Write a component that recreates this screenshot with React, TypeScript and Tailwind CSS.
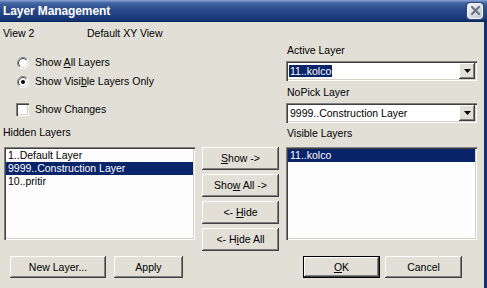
import React from 'react';

// Classic Win32 dialog: Layer Management

const raised =
  'shadow-[inset_-1px_-1px_#404040,inset_1px_1px_#ffffff,inset_-2px_-2px_#808080,inset_2px_2px_#e2dfd7]';
const sunken =
  'shadow-[inset_1px_1px_#808080,inset_2px_2px_#404040,inset_-1px_-1px_#ffffff,inset_-2px_-2px_#d4d0c8]';

const U = ({ children }: { children: React.ReactNode }) => (
  <span className="underline underline-offset-[1px] decoration-1">{children}</span>
);

function Btn({ children, className = '', isDefault = false }: { children: React.ReactNode; className?: string; isDefault?: boolean }) {
  return (
    <div
      className={`flex items-center justify-center bg-[#e2dfd7] ${raised} ${isDefault ? 'border border-black' : ''} ${className}`}
    >
      {children}
    </div>
  );
}

function Radio({ id, checked }: { id: string; checked?: boolean }) {
  return (
    <svg width="12" height="12" viewBox="0 0 12 12">
      <defs>
        <linearGradient id={`o${id}`} x1="0" y1="0" x2="1" y2="1">
          <stop offset="0.5" stopColor="#808080" />
          <stop offset="0.5" stopColor="#ffffff" />
        </linearGradient>
        <linearGradient id={`i${id}`} x1="0" y1="0" x2="1" y2="1">
          <stop offset="0.5" stopColor="#404040" />
          <stop offset="0.5" stopColor="#d4d0c8" />
        </linearGradient>
      </defs>
      <circle cx="6" cy="6" r="5.5" fill="#fff" stroke={`url(#o${id})`} strokeWidth="1" />
      <circle cx="6" cy="6" r="4.5" fill="#fff" stroke={`url(#i${id})`} strokeWidth="1" />
      {checked && <circle cx="6" cy="6" r="2" fill="#000" />}
    </svg>
  );
}

function Arrow() {
  return (
    <svg width="7" height="4" viewBox="0 0 7 4">
      <polygon points="0,0 7,0 3.5,4" fill="#000" />
    </svg>
  );
}

function Combo({ children }: { children: React.ReactNode }) {
  return (
    <div className={`flex h-[20px] w-[191px] items-center bg-white p-[2px] ${sunken}`}>
      <div className="flex flex-1 items-center pl-[1px]">{children}</div>
      <div className={`flex h-[16px] w-[16px] items-center justify-center bg-[#e2dfd7] ${raised}`}>
        <Arrow />
      </div>
    </div>
  );
}

export default function App() {
  const hidden = ['1..Default Layer', '9999..Construction Layer', '10..pritir'];

  return (
    <div className="flex h-[288px] w-[487px] flex-col overflow-hidden bg-[#e2dfd7] font-['Liberation_Sans',Arial,sans-serif] text-[10.5px] leading-none text-black">
      {/* title bar */}
      <div className="flex h-[22px] shrink-0 items-center justify-between border-b border-[#0c2558] bg-[linear-gradient(180deg,#8aa4d4_0%,#4465a3_14%,#2a4a8b_45%,#1d3c7b_80%,#12306c_100%)] pl-[3px] pr-[4px]">
        <span className="text-[12px] font-bold tracking-[-0.1px] text-white">Layer Management</span>
        <div className="flex h-[16px] w-[16px] items-center justify-center rounded-[3px] border border-[#f6f7fa] bg-[linear-gradient(135deg,#f4f5f8,#c0c5d0)] shadow-[0_0_0_1px_#2f4678]">
          <svg width="9" height="9" viewBox="0 0 9 9">
            <path d="M1 1 L8 8 M8 1 L1 8" stroke="#6a7080" strokeWidth="2" strokeLinecap="square" />
          </svg>
        </div>
      </div>

      {/* body */}
      <div className="flex flex-1 flex-col border-r-[3px] border-[#12306c] pl-[3px]">
        <div className="mt-[2px] flex h-[18px] items-center">
          <span className="w-[84px]">View 2</span>
          <span>Default XY View</span>
        </div>

        <div className="flex h-[103px]">
          <div className="flex w-[283px] flex-col">
            <div className="mt-[11px] flex h-[19px] items-center gap-[6px] pl-[14px]">
              <Radio id="a" />
              <span>
                Show <U>A</U>ll Layers
              </span>
            </div>
            <div className="flex h-[19px] items-center gap-[6px] pl-[14px]">
              <Radio id="b" checked />
              <span>
                Show Visi<U>b</U>le Layers Only
              </span>
            </div>
            <div className="mt-[9px] flex h-[18px] items-center gap-[6px] pl-[13px]">
              <div className={`h-[13px] w-[13px] bg-white ${sunken}`} />
              <span>Show Changes</span>
            </div>
            <div className="mt-[6px] flex h-[16px] items-center">Hidden Layers</div>
          </div>

          <div className="flex w-[191px] flex-col">
            <div className="flex h-[16px] items-center pl-[1px]">Active Layer</div>
            <div className="mt-[3px]">
              <Combo>
                <span className="h-[12px] bg-[#0a246a] px-[1px] leading-[12px] text-white">11..kolco</span>
              </Combo>
            </div>
            <div className="mt-[3px] flex h-[16px] items-center pl-[1px]">NoPick Layer</div>
            <div className="mt-[3px]">
              <Combo>
                <span className="pl-[1px]">9999..Construction Layer</span>
              </Combo>
            </div>
            <div className="mt-[2px] flex h-[16px] items-center pl-[1px]">Visible Layers</div>
          </div>
        </div>

        <div className="mt-[2px] flex items-start">
          <div className={`ml-[1px] h-[93px] w-[191px] bg-[#fdfdfd] p-[2px] ${sunken}`}>
            {hidden.map((l, i) => (
              <div
                key={l}
                className={`flex h-[13px] items-center pl-[2px] ${i === 1 ? 'bg-[#0a246a] text-white' : ''}`}
              >
                {l}
              </div>
            ))}
          </div>

          <div className="ml-[7px] flex w-[77px] flex-col gap-[4px]">
            <Btn className="h-[23px]">
              <span>
                <U>S</U>how -&gt;
              </span>
            </Btn>
            <Btn className="h-[23px]">
              <span>
                Sho<U>w</U> All -&gt;
              </span>
            </Btn>
            <Btn className="h-[23px]">
              <span>
                &lt;- <U>H</U>ide
              </span>
            </Btn>
            <Btn className="h-[23px]">
              <span>
                &lt;- H<U>i</U>de All
              </span>
            </Btn>
          </div>

          <div className={`ml-[7px] h-[93px] w-[191px] bg-[#fdfdfd] p-[2px] ${sunken}`}>
            <div className="flex h-[13px] items-center bg-[#0a246a] pl-[2px] text-white">11..kolco</div>
          </div>
        </div>

        <div className="mt-[5px] flex h-[22px]">
          <Btn className="ml-[7px] w-[96px]">New Layer...</Btn>
          <Btn className="ml-[8px] w-[69px]">Apply</Btn>
          <Btn className="ml-[120px] w-[77px]" isDefault>
            <span>
              <U>O</U>K
            </span>
          </Btn>
          <Btn className="ml-[5px] w-[77px]">Cancel</Btn>
        </div>
      </div>
    </div>
  );
}
